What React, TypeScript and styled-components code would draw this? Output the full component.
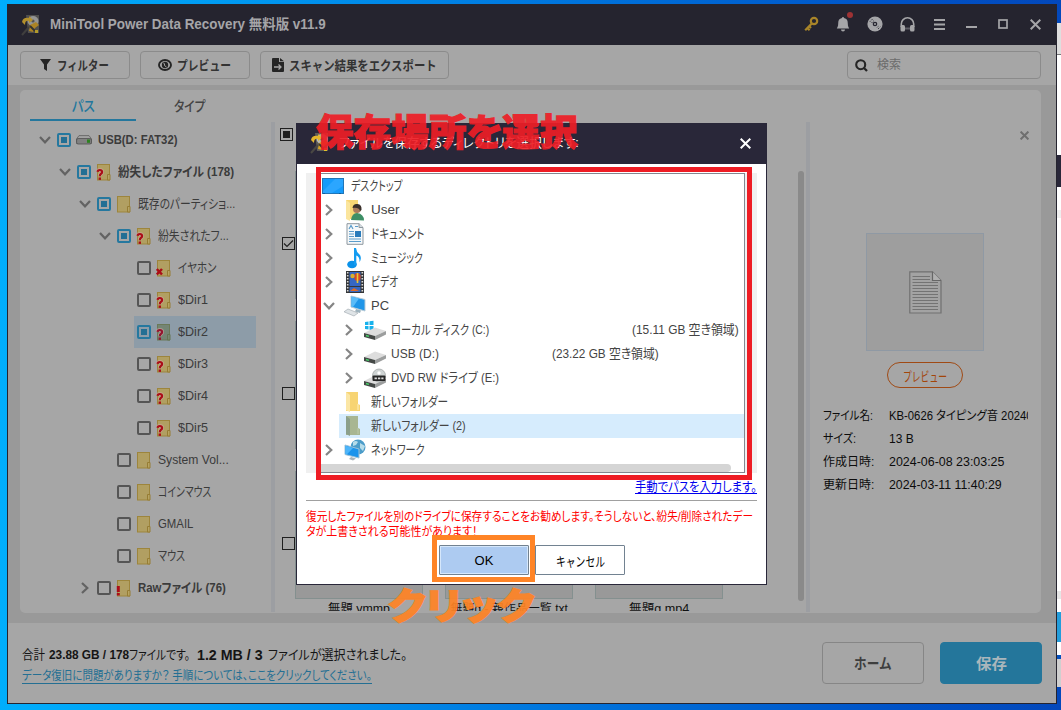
import { ReactNode, useLayoutEffect, useRef, useState } from 'react';
import styled, { createGlobalStyle, css } from 'styled-components';

const GlobalStyle = createGlobalStyle`
    * {
        box-sizing: border-box;
    }

    body {
        margin: 0;
        overflow: hidden;
        font-family: 'Liberation Sans', 'Noto Sans CJK JP', sans-serif;
        font-size: 12px;
        font-feature-settings: 'palt';
    }
`

const Desktop = styled.div`
    position: relative;
    display: flex;
    width: 1061px;
    height: 710px;
    padding: 4px 0 6px 7px;
    overflow: hidden;
    background: linear-gradient(90deg, #00aefc 0, #009cf3 20%, #0078df 50%, #0052c6 85%, #0348bb 100%);
`

const AppWindow = styled.div`
    display: flex;
    flex-direction: column;
    width: 1050px;
    height: 700px;
    flex: none;
    background: #999999;
    border: 1px solid #25242f;
    border-top: 0;
`

const Behind = styled.div`
    display: flex;
    flex-direction: column;
    width: 4px;
    margin-top: 19px;
    height: 664px;
    overflow: hidden;
`
const Strip = styled.div<{ $h: number; $color: string }>`
    flex: none;
    height: ${({ $h }) => $h}px;
    background: ${({ $color }) => $color};
`

const FitBox = styled.span`
    display: inline-block;
    flex: none;
    white-space: pre;
    text-align: left;
    vertical-align: top;
`
const FitInner = styled.span`
    display: inline-block;
    transform-origin: left center;
`

// squeezes a label to the width the narrow UI font would give it
function Fit({ w, children }: { w: number; children: ReactNode }) {
    const ref = useRef<HTMLSpanElement>(null);
    const [scale, setScale] = useState(1);

    useLayoutEffect(() => {
        if (ref.current && ref.current.offsetWidth) setScale(w / ref.current.offsetWidth);
    }, [w]);

    return (
        <FitBox style={{ width: w }}>
            <FitInner ref={ref} style={{ transform: `scaleX(${scale})` }}>{children}</FitInner>
        </FitBox>
    )
}

/* ---------- title bar ---------- */

const TitleBar = styled.header`
    display: flex;
    align-items: center;
    flex: none;
    height: 41px;
    padding: 0 5px 0 13px;
    background: #25242f;
    color: #a5a5a8;
    font-size: 14px;
    font-weight: bold;
`
const TitleText = styled.div`
    flex: 1;
    margin-left: 9px;
    padding-bottom: 2px;
    line-height: 20px;
`
const TitleIcons = styled.div`
    display: grid;
    grid-template-columns: repeat(8, 32px);
    place-items: center;
    padding-bottom: 1px;

    & svg {
        display: block;
    }
`

const Logo = ({ dim }: { dim?: boolean }) => (
    <svg width="20" height="22" viewBox="0 0 20 22" opacity={dim ? 0.75 : 1}>
        <path d="M5 1 L18 1 L18 19 L7 19 Z" fill="#5e5c58" />
        <ellipse cx="12" cy="7" rx="5.5" ry="5" fill="#b9bab5" />
        <circle cx="12" cy="7" r="1.6" fill="#62625e" />
        <path d="M1 8 Q2 3 8 4 L8 2 L12 6 L8 9 L8 7 Q4 6 4 11 Z" fill="#e3b52c" />
        <path d="M9 11 L15 8 L18 11 L14 14 L12 18 L8 17 Z" fill="#d8a322" />
        <path d="M1 21 L8 13" stroke="#4a4843" strokeWidth="2" />
        <path d="M9 12 L14 17" stroke="#3a3731" strokeWidth="2" />
        <rect x="14" y="16" width="3" height="3" fill="#e2c22a" />
    </svg>
)

const KeyIcon = () => (
    <svg width="15" height="16" viewBox="0 0 15 16">
        <circle cx="10" cy="5" r="3.2" fill="none" stroke="#a98529" strokeWidth="2.2" />
        <path d="M7.8 7.5 L1.2 14.2 M3.4 12 L5.6 14.2 M5.2 10.2 L7 12" stroke="#a98529" strokeWidth="2.2" fill="none" />
    </svg>
)
const BellIcon = () => (
    <svg width="20" height="24" viewBox="0 0 20 24">
        <path d="M10 5 a1 1 0 0 1 1 1 c3 .6 3.800 2.600 3.800 5.400 0 2.500.7 3.500 1.400 5.100 H3.800 c.7-1.600 1.400-2.600 1.400-5.100 C5.200 8.600 6 6.600 9 6 a1 1 0 0 1 1-1z M8 17.600 h4 a2 2 0 0 1-4 0z" fill="#a5a5a8" />
        <circle cx="17" cy="3" r="3" fill="#9e3234" />
    </svg>
)
const DiscIcon = () => (
    <svg width="16" height="16" viewBox="0 0 16 16">
        <circle cx="8" cy="8" r="7.6" fill="#a5a5a8" />
        <circle cx="8" cy="8" r="2.3" fill="#25242f" />
        <circle cx="8" cy="8" r="1" fill="#a5a5a8" />
        <path d="M2.800 5.800 L5.800 2.800 M4.500 7 L7 4.500 M10 11.500 L12 9.500 M11 13 L13.300 10.700" stroke="#25242f" strokeWidth="0.8" strokeDasharray="1.5 1" />
    </svg>
)
const HeadphoneIcon = () => (
    <svg width="15" height="15" viewBox="0 0 15 15">
        <path d="M1.300 10 V7 a6.200 6.200 0 0 1 12.400 0 V10" fill="none" stroke="#a5a5a8" strokeWidth="1.6" />
        <rect x="0.5" y="8" width="4.500" height="6.500" rx="1.500" fill="#a5a5a8" />
        <rect x="10" y="8" width="4.500" height="6.500" rx="1.500" fill="#a5a5a8" />
        <path d="M5 11.500 H10" stroke="#5e5d66" strokeWidth="2" />
    </svg>
)
const MenuIcon = () => (
    <svg width="11" height="11" viewBox="0 0 11 11">
        <path d="M0 1 H11 M0 5.500 H11 M0 10 H11" stroke="#a5a5a8" strokeWidth="2" />
    </svg>
)
const MinIcon = () => (
    <svg width="11" height="11" viewBox="0 0 11 11"><path d="M0 8 H11" stroke="#a5a5a8" strokeWidth="2" /></svg>
)
const MaxIcon = () => (
    <svg width="10" height="10" viewBox="0 0 10 10"><rect x="1" y="1" width="8" height="8" fill="none" stroke="#a5a5a8" strokeWidth="1.700" /></svg>
)
const CloseIcon = ({ size = 11, color = '#a5a5a8', width = 2 }: { size?: number; color?: string; width?: number }) => (
    <svg width={size} height={size} viewBox="0 0 11 11"><path d="M.7.7 L10.300 10.300 M10.300.7 L.7 10.300" stroke={color} strokeWidth={width} /></svg>
)

/* ---------- toolbar ---------- */

const Toolbar = styled.div`
    display: flex;
    align-items: center;
    gap: 10px;
    flex: none;
    height: 40px;
    padding: 0 15px 0 12px;
    background: #a6a6a6;
`
const ToolButton = styled.button<{ $w: number; $gap: number }>`
    display: flex;
    align-items: center;
    justify-content: center;
    gap: ${({ $gap }) => $gap}px;
    width: ${({ $w }) => $w}px;
    height: 28px;
    padding: 0 1px 1px 0;
    background: transparent;
    border: 1px solid #8b8b8b;
    border-radius: 4px;
    color: #333333;
    font: bold 13px 'Liberation Sans', 'Noto Sans CJK JP', sans-serif;
`
const Search = styled.div`
    display: flex;
    align-items: center;
    gap: 9px;
    width: 194px;
    height: 28px;
    margin-left: auto;
    padding-left: 7px;
    border: 1px solid #8b8b8b;
    border-radius: 4px;
    color: #6b6b6b;
    line-height: 16px;
`

/* ---------- main panel ---------- */

const Body = styled.main`
    flex: none;
    height: 538px;
    padding: 5px 15px 10px 12px;
`
const Panel = styled.div`
    display: flex;
    height: 523px;
    overflow: hidden;
    background: #a6a6a6;
    border-radius: 5px;
`
const Sidebar = styled.div`
    width: 251px;
    flex: none;
`
const Tabs = styled.div`
    display: flex;
    height: 32px;
    padding-left: 10px;
`
const Tab = styled.div<{ $active?: boolean }>`
    display: flex;
    align-items: center;
    justify-content: center;
    width: 106px;
    height: 31px;
    color: #444444;
    font-size: 14px;
    font-weight: 500;
    border-bottom: 2px solid transparent;

    ${({ $active }) => $active && css`
        color: #22779d;
        border-bottom-color: #24779d;
    `}
`
const Tree = styled.div`
    padding-top: 2px;
`
const TreeRow = styled.div<{ $level: number; $selected?: boolean }>`
    display: flex;
    align-items: center;
    height: 32px;
    width: ${({ $level }) => 236 - ($level * 20 + 14)}px;
    margin-left: ${({ $level }) => $level * 20 + 14}px;
    padding-left: 5px;
    background: ${({ $selected }) => $selected ? 'linear-gradient(90deg, transparent 20px, #8d9ca8 20px)' : 'none'};
    color: #3b3b3b;
    font-size: 13px;
`
const ChevronSlot = styled.div`
    display: flex;
    justify-content: center;
    width: 12px;
    margin-right: 6px;
`
const CheckBox = styled.div<{ $on?: boolean }>`
    display: grid;
    place-items: center;
    width: 14px;
    height: 14px;
    flex: none;
    border: 2px solid ${({ $on }) => $on ? '#25789f' : '#555555'};
    border-radius: 2px;

    &::after {
        content: '';
        width: 6px;
        height: 6px;
        background: ${({ $on }) => $on ? '#236f94' : 'transparent'};
    }
`
const TreeIcon = styled.div`
    display: flex;
    align-items: center;
    width: 22px;
    margin-left: 5px;
    flex: none;
`
const TreeLabel = styled.div<{ $bold?: boolean }>`
    font-weight: ${({ $bold }) => $bold ? 'bold' : 'normal'};
    line-height: 18px;
`
const Divider = styled.div`
    width: 4px;
    height: 490px;
    margin-top: 32px;
    flex: none;
    background: #9c9ea2;
`

const Chevron = ({ open, color = '#636363' }: { open?: boolean; color?: string }) => open
    ? <svg width="12" height="8" viewBox="0 0 12 8"><path d="M1 1 L6 6.300 L11 1" fill="none" stroke={color} strokeWidth="2.2" /></svg>
    : <svg width="8" height="12" viewBox="0 0 8 12"><path d="M1 1 L6.300 6 L1 11" fill="none" stroke={color} strokeWidth="2.2" /></svg>

const DriveIcon = () => (
    <svg width="16" height="10" viewBox="0 0 16 10">
        <path d="M3 .6 H13 L15.500 4 V8.500 H.5 V4z" fill="#a2a2a2" stroke="#5e5e5e" strokeWidth="0.8" />
        <rect x="0.6" y="3.500" width="14.800" height="5.500" rx="1.500" fill="#818181" stroke="#515151" strokeWidth="0.8" />
        <rect x="11" y="4.500" width="3" height="3.300" fill="#2d8220" />
    </svg>
)

type Mark = 'q' | 'x' | 'e' | undefined;

const FolderIcon = ({ mark, selected }: { mark?: Mark; selected?: boolean }) => (
    <svg width="16" height="17" viewBox="0 0 16 17">
        <rect x="1.500" y="0.500" width="12" height="15.500" fill={selected ? '#748574' : '#b19f62'} stroke={selected ? '#6b7958' : '#9d853c'} strokeWidth="1" />
        <path d="M11.500 16 V10.500 H14 V16z" fill={selected ? '#788a72' : '#b7a463'} stroke={selected ? '#667453' : '#967d34'} strokeWidth="1" />
        {mark === 'q' && (
            <g transform="translate(.8 5)">
                <path d="M.8 2.900 Q1 1 3 1 Q5.300 1 5.300 3 Q5.300 4.300 4 5 Q3 5.600 3 7.200" fill="none" stroke="#c9aba0" strokeWidth="4" opacity="0.6" />
                <path d="M.8 2.900 Q1 1 3 1 Q5.300 1 5.300 3 Q5.300 4.300 4 5 Q3 5.600 3 7.200" fill="none" stroke={selected ? '#95152f' : '#ab0d18'} strokeWidth="2.200" />
                <rect x="1.800" y="8.500" width="2.400" height="2.400" fill={selected ? '#95152f' : '#ab0d18'} />
            </g>
        )}
        {mark === 'x' && <path d="M.8 9 L6 14.500 M6 9 L.8 14.500" stroke="#ab0d18" strokeWidth="2.500" />}
        {mark === 'e' && <path d="M2.300 6 V12 M2.300 13 V15.500" stroke="#ab0d18" strokeWidth="3" />}
    </svg>
)

interface ITreeItem {
    level: number;
    label: string;
    w: number;
    chevron?: 'open' | 'closed';
    on?: boolean;
    bold?: boolean;
    mark?: Mark;
    drive?: boolean;
    selected?: boolean;
}

const treeItems: ITreeItem[] = [
    { level: 0, label: 'USB(D: FAT32)', w: 79, chevron: 'open', on: true, bold: true, drive: true },
    { level: 1, label: '紛失したファイル (178)', w: 116, chevron: 'open', on: true, bold: true, mark: 'q' },
    { level: 2, label: '既存のパーティショ...', w: 97, chevron: 'open', on: true },
    { level: 3, label: '紛失されたフ...', w: 71, chevron: 'open', on: true, mark: 'q' },
    { level: 4, label: 'イヤホン', w: 38, mark: 'x' },
    { level: 4, label: '$Dir1', w: 30, mark: 'q' },
    { level: 4, label: '$Dir2', w: 30, on: true, mark: 'q', selected: true },
    { level: 4, label: '$Dir3', w: 30, mark: 'q' },
    { level: 4, label: '$Dir4', w: 30, mark: 'q' },
    { level: 4, label: '$Dir5', w: 30, mark: 'q' },
    { level: 3, label: 'System Vol...', w: 71 },
    { level: 3, label: 'コインマウス', w: 53 },
    { level: 3, label: 'GMAIL', w: 35 },
    { level: 3, label: 'マウス', w: 27 },
    { level: 2, label: 'Rawファイル (76)', w: 88, chevron: 'closed', bold: true, mark: 'e' },
]

/* ---------- file grid ---------- */

const Files = styled.div`
    display: flex;
    width: 531px;
    height: 521px;
    flex: none;
    overflow: hidden;
    padding-top: 38px;
`
const CheckColumn = styled.div`
    display: flex;
    flex-direction: column;
    width: 20px;
    flex: none;
    padding-left: 5px;
`
const FileCheck = styled.div<{ $top: number; $left: number }>`
    display: grid;
    place-items: center;
    width: 13px;
    height: 13px;
    flex: none;
    margin-top: ${({ $top }) => $top}px;
    margin-left: ${({ $left }) => $left}px;
    border: 1px solid #1f1f1f;
`
const FilledMark = styled.div`
    width: 7px;
    height: 7px;
    background: #1e1e1e;
`
const CardGrid = styled.div`
    display: grid;
    grid-template-columns: repeat(3, 128px);
    grid-auto-rows: 150px;
    column-gap: 22px;
    height: 446px;
    flex: none;
    margin-top: 43px;
`
const Card = styled.div`
    display: flex;
    flex-direction: column;
    align-items: center;
    color: #111111;
    font-size: 12px;
    line-height: 18px;
`
const Thumb = styled.div`
    width: 128px;
    height: 128px;
    flex: none;
    margin-bottom: 1px;
    background: #999999;
    border: 1px solid #84908f;
`
const ScrollThumb = styled.div`
    width: 6px;
    height: 430px;
    margin-top: 43px;
    margin-left: 75px;
    flex: none;
    border-radius: 3px;
    background: #8a8a8a;
`

const cards = [
    ['', 0], ['', 0], ['', 0],
    ['', 0], ['', 0], ['', 0],
    ['無題.ymmp', 62], ['無題g - 親作品一覧.txt', 117], ['無題g.mp4', 60],
] as [string, number][]

/* ---------- details ---------- */

const Details = styled.div`
    display: flex;
    flex-direction: column;
    align-items: center;
    width: 231px;
    padding: 41px 13px 0;
    color: #0c0c0c;
`
const DetailsClose = styled.div`
    display: flex;
    align-self: flex-end;
    height: 102px;
    margin-right: -1px;
`
const PreviewBox = styled.div`
    display: grid;
    place-items: center;
    width: 118px;
    height: 118px;
    flex: none;
    margin-right: 1px;
    background: #9e9e9e;
    border: 1px solid #8f99a4;
`
const PreviewButton = styled.button`
    display: grid;
    place-items: center;
    width: 76px;
    height: 26px;
    margin: 11px 1px 16px 0;
    padding: 0;
    background: transparent;
    border: 1px solid #a04a14;
    border-radius: 13px;
    color: #a34509;
    font: 13px 'Liberation Sans', 'Noto Sans CJK JP', sans-serif;
`
const InfoRow = styled.div`
    display: grid;
    grid-template-columns: 66px 139px;
    align-self: stretch;
    height: 23px;
    align-items: center;
    line-height: 20px;
    overflow: hidden;

    & > * {
        overflow: hidden;
    }
`

const info = [
    ['ファイル名:', 50, 'KB-0626 タイピング音 20240', 144],
    ['サイズ:', 33, '13 B', 25],
    ['作成日時:', 51, '2024-06-08 23:03:25', 115],
    ['更新日時:', 51, '2024-03-11 11:40:29', 113],
] as [string, number, string, number][]

/* ---------- footer ---------- */

const Footer = styled.footer`
    display: flex;
    align-items: center;
    gap: 16px;
    flex: none;
    height: 80px;
    padding: 0 14px;
    background: #a6a6a6;
`
const Status = styled.div`
    flex: 1;
    color: #151515;
`
const StatusLine = styled.div`
    display: flex;
    align-items: center;
    height: 22px;
    margin: 1px 0 2px;
    font-size: 13px;
    line-height: 20px;

    & b {
        margin: 0 0 0 4px;
    }

    & b:nth-of-type(2) {
        margin: 0 5px 0 7px;
        font-size: 14px;
    }
`
const HelpLink = styled.a`
    display: inline-block;
    border-bottom: 1px solid #246f93;
    color: #246f93;
    font-size: 12.5px;
    line-height: 16px;
    height: 16px;
`
const FooterButton = styled.button<{ $primary?: boolean }>`
    width: 102px;
    height: 42px;
    padding: 0 0 1px;
    border: 1px solid ${({ $primary }) => $primary ? '#24769b' : '#868686'};
    border-radius: 4px;
    background: ${({ $primary }) => $primary ? '#24769b' : 'transparent'};
    color: ${({ $primary }) => $primary ? '#aab6bc' : '#3e3e3e'};
    font: bold 15px 'Liberation Sans', 'Noto Sans CJK JP', sans-serif;
`

/* ---------- dialog ---------- */

const Dialog = styled.div`
    position: absolute;
    left: 296px;
    top: 123px;
    width: 471px;
    height: 462px;
    background: #ffffff;
    border: 1px solid #292739;
    color: #444444;
`
const DialogHeader = styled.div`
    display: flex;
    align-items: center;
    height: 40px;
    padding: 0 15px 2px 13px;
    background: #292739;
    color: #ffffff;
    font-size: 13px;
    line-height: 20px;
`
const DialogTitle = styled.div`
    flex: 1;
    margin-left: 9px;
`
const DialogBody = styled.div`
    padding: 9px 9px 0;
`
const ListWell = styled.div`
    height: 300px;
    padding: 0 12px;
    background: #f0f0f0;
`
const List = styled.div`
    display: flex;
    flex-direction: column;
    height: 300px;
    background: #ffffff;
    border: 1px solid #828790;
`
const DirRow = styled.div<{ $indent: number; $selected?: boolean }>`
    display: flex;
    align-items: center;
    height: 24px;
    flex: none;
    margin-left: ${({ $indent }) => $indent * 20}px;
    padding-left: 2px;
    font-size: 13px;
    line-height: 20px;
    background: ${({ $selected }) => $selected ? '#d6ecfd' : 'none'};
`
const DirChevron = styled.div`
    display: flex;
    justify-content: center;
    width: 15px;
`
const DirIcon = styled.div`
    display: flex;
    width: 24px;
    margin: 0 4px 0 7px;
    justify-content: center;
`
const RootIcon = styled(DirIcon)`
    justify-content: flex-start;
    width: 26px;
    margin: 0 4px 0 0;
    padding-left: 1px;
`
const FreeSpace = styled.div<{ $end: number }>`
    margin-left: auto;
    margin-right: ${({ $end }) => $end}px;
`
const HScroll = styled.div`
    width: 412px;
    height: 8px;
    margin-top: 2px;
    background: #d5d5d5;
    border-radius: 0 4px 4px 0;
`
const PathLink = styled.div`
    height: 18px;
    margin: 5px 0 4px;
    text-align: right;
    color: #0000ee;
    font-size: 13px;
    line-height: 18px;

    & > span {
        height: 16px;
        border-bottom: 1px solid #0000ee;
    }
`
const Warning = styled.div`
    padding-top: 9px;
    border-top: 1px solid #a0a0a0;
    color: #ff0000;
    font-size: 12px;
    line-height: 15px;
    height: 45px;
`
const DialogButtons = styled.div`
    display: flex;
    gap: 6px;
    padding-left: 133px;
`
const DialogButton = styled.button<{ $primary?: boolean }>`
    width: 90px;
    height: 30px;
    padding: 0;
    border: 1px solid #728291;
    border-radius: 1px;
    background: ${({ $primary }) => $primary ? '#adcbf1' : '#ffffff'};
    box-shadow: ${({ $primary }) => $primary ? 'inset 0 0 0 1px #d5e7fb' : 'none'};
    color: #000000;
    font: 13px 'Liberation Sans', 'Noto Sans CJK JP', sans-serif;
`

const Frame = styled.div<{ $x: number; $y: number; $w: number; $h: number; $color: string }>`
    position: absolute;
    left: ${({ $x }) => $x}px;
    top: ${({ $y }) => $y}px;
    width: ${({ $w }) => $w}px;
    height: ${({ $h }) => $h}px;
    border: 5px solid ${({ $color }) => $color};
`
const Callout = styled.div<{ $x: number; $y: number; $color: string }>`
    position: absolute;
    left: ${({ $x }) => $x}px;
    top: ${({ $y }) => $y}px;
    color: ${({ $color }) => $color};
    opacity: 0.92;
    font-family: 'Noto Sans CJK JP', sans-serif;
    font-weight: 900;
    font-size: 37px;
    line-height: 44px;
    -webkit-text-stroke: 1.2px ${({ $color }) => $color};
`

const DesktopIcon = () => (
    <svg width="22" height="17" viewBox="0 0 22 17">
        <rect x="0.5" y="0.5" width="21" height="15" fill="#159bfb" stroke="#2176b8" />
        <path d="M1 13 L13 1 H21 V8 L10 15 H1z" fill="#2ba6ff" />
        <path d="M1 15.500 H21" stroke="#0b5f9d" strokeDasharray="2 14 2 2" />
    </svg>
)
const UserIcon = () => (
    <svg width="20" height="21" viewBox="0 0 20 21">
        <path d="M1 0 H13 V19 H1z" fill="#f8d775" />
        <path d="M1 0 L5 3 V21 L1 19z" fill="#fbe59d" />
        <path d="M6 20 Q7 13 12 13 Q19 14 19 20.500z" fill="#3d8f66" />
        <circle cx="12" cy="9" r="4" fill="#a97b5c" />
        <path d="M7.500 8 Q8 3.500 12.500 4 Q17 4.500 16.500 10 L15 11 Q14 7 7.500 8z" fill="#3a302b" />
    </svg>
)
const DocIcon = () => (
    <svg width="18" height="22" viewBox="0 0 18 22">
        <path d="M1 .7 H13 L17 4.500 V21.300 H1z" fill="#f5f8fa" stroke="#8d979e" />
        <path d="M13 .7 V4.500 H17" fill="#d5dde2" stroke="#8d979e" />
        <path d="M3 6 L5 2.500 L7 6 M9 3.500 H12 M3 8.500 H8 M3 11 H8 M3 13.500 H8 M3 16 H15 M3 18.500 H15" stroke="#5b9cca" strokeWidth="1.2" fill="none" />
        <rect x="9" y="8" width="6" height="6" fill="#297bbb" />
    </svg>
)
const MusicIcon = () => (
    <svg width="18" height="22" viewBox="0 0 18 22">
        <ellipse cx="6" cy="17.500" rx="4.800" ry="3.800" fill="#0a92ea" />
        <path d="M8 18 V1 H10 Q10.500 5 13 7 Q16.500 10 13.500 15.500 Q14 10 10.300 8.500 V18z" fill="#149cf1" />
    </svg>
)
const VideoIcon = () => (
    <svg width="18" height="22" viewBox="0 0 18 22">
        <rect width="18" height="22" fill="#343638" />
        <rect x="3.500" y="1" width="11" height="14" fill="#3567c3" />
        <rect x="3.500" y="16" width="11" height="5" fill="#3567c3" />
        <ellipse cx="11.500" cy="6" rx="3.200" ry="4" fill="#d74725" />
        <path d="M11.500 2 V12" stroke="#e8c933" strokeWidth="1.6" />
        <circle cx="6.500" cy="5" r="2.200" fill="#d9ae2f" />
        <path d="M4 20 L8 17 L13 20z" fill="#d96a28" />
        <path d="M1.700 1 V22 M16.300 1 V22" stroke="#dadada" strokeWidth="1.6" strokeDasharray="1.5 1.5" />
    </svg>
)
const PcIcon = () => (
    <svg width="24" height="22" viewBox="0 0 24 22">
        <path d="M8 1 L22 4.500 V16 L8 12z" fill="#2096e8" stroke="#b7cbd8" />
        <path d="M8.500 1.500 L16 3.500 L10 12 L8.500 11.700z" fill="#5bbcf8" />
        <path d="M13 14 L18 15.500 L17 18 L12 16.500z" fill="#9db2bd" />
        <path d="M5 14 L15 18 L11 21 L1 16.800z" fill="#dfe4e7" stroke="#a6afb5" strokeWidth="0.7" />
    </svg>
)
const DiskIcon = ({ kind }: { kind: 'win' | 'usb' | 'dvd' }) => (
    <svg width="22" height="20" viewBox="0 0 22 20">
        {kind === 'win' && <path d="M1 2 L4.500 1.500 V5 H1z M5.500 1.300 L9.500 .7 V5 H5.500z M1 6 H4.500 V9.500 L1 9z M5.500 6 H9.500 V10.300 L5.500 9.700z" fill="#17b1ec" />}
        <path d="M0 13 L11 7.500 L22 11 L11 16z" fill="#dddddd" />
        <path d="M0 13 L11 16 V20 L0 17z" fill="#444846" />
        <path d="M11 16 L22 11 V14.500 L11 20z" fill="#9c9e9e" />
        <path d="M2 15.500 L5 16.300" stroke="#48d36a" strokeWidth="1.3" />
        {kind === 'dvd' && (
            <g>
                <circle cx="15" cy="7.500" r="6.500" fill="#cfd4d4" stroke="#9b9f9f" strokeWidth="0.7" />
                <circle cx="15" cy="5" r="1.700" fill="#ffffff" />
                <rect x="8.500" y="7.500" width="13" height="5.500" rx="1" fill="#262626" />
                <path d="M10.500 10.300 H19.500" stroke="#dddddd" strokeWidth="1.7" strokeDasharray="2.4 1" />
            </g>
        )}
    </svg>
)
const DirFolderIcon = ({ selected }: { selected?: boolean }) => (
    <svg width="20" height="20" viewBox="0 0 20 20">
        <path d="M1 0 H13 V12 L15 13 V19 H1z" fill={selected ? '#a8b692' : '#f7d473'} />
        <path d="M1 0 L5 3 V20 L1 18z" fill={selected ? '#8ca08b' : '#fbe6a5'} />
        <path d="M13 12 V18" stroke={selected ? '#bdc9a8' : '#fff0bd'} />
    </svg>
)
const NetworkIcon = () => (
    <svg width="22" height="22" viewBox="0 0 22 22">
        <circle cx="14" cy="8" r="7.500" fill="#4b9cc9" />
        <path d="M9 3 Q12 1 14 3 L12 6 L9 7z M16 4 L21 7 L19 12 L16 9z" fill="#b6dcea" />
        <path d="M1 6 L15 10 V19 L1 15.500z" fill="#1b94ec" stroke="#9cc2d9" />
        <path d="M1.500 6.700 L9 9 L3 15.300 L1.500 15z" fill="#4db5fa" />
        <path d="M7 18 L12 19.500 L9 21.500 L5 20z" fill="#a9b4ba" />
    </svg>
)

interface IDirItem {
    indent: number;
    label: string;
    w: number;
    icon: ReactNode;
    chevron?: 'open' | 'closed';
    root?: boolean;
    selected?: boolean;
    free?: string;
    freeEnd?: number;
}

const dirItems: IDirItem[] = [
    { indent: 0, label: 'デスクトップ', w: 52, icon: <DesktopIcon />, root: true },
    { indent: 0, label: 'User', w: 28, icon: <UserIcon />, chevron: 'closed' },
    { indent: 0, label: 'ドキュメント', w: 53, icon: <DocIcon />, chevron: 'closed' },
    { indent: 0, label: 'ミュージック', w: 52, icon: <MusicIcon />, chevron: 'closed' },
    { indent: 0, label: 'ビデオ', w: 27, icon: <VideoIcon />, chevron: 'closed' },
    { indent: 0, label: 'PC', w: 18, icon: <PcIcon />, chevron: 'open' },
    { indent: 1, label: 'ローカル ディスク (C:)', w: 98, icon: <DiskIcon kind="win" />, chevron: 'closed', free: '(15.11 GB 空き領域)', freeEnd: 5 },
    { indent: 1, label: 'USB (D:)', w: 48, icon: <DiskIcon kind="usb" />, chevron: 'closed', free: '(23.22 GB 空き領域)', freeEnd: 85 },
    { indent: 1, label: 'DVD RW ドライブ (E:)', w: 108, icon: <DiskIcon kind="dvd" />, chevron: 'closed' },
    { indent: 0, label: '新しいフォルダー', w: 77, icon: <DirFolderIcon /> },
    { indent: 0, label: '新しいフォルダー (2)', w: 95, icon: <DirFolderIcon selected />, selected: true },
    { indent: 0, label: 'ネットワーク', w: 54, icon: <NetworkIcon />, chevron: 'closed' },
]

// the selection starts at the icon, after the chevron slot
const SelectedDir = styled(DirRow)`
    margin-left: 20px;
    padding-left: 0;

    & > ${DirIcon} {
        margin-left: 4px;
    }
`

function Directory({ item }: { item: IDirItem }) {
    const Row = item.selected ? SelectedDir : DirRow;
    const Icon = item.root ? RootIcon : DirIcon;
    return (
        <Row $indent={item.indent} $selected={item.selected}>
            {!item.root && !item.selected && (
                <DirChevron>{item.chevron && <Chevron open={item.chevron === 'open'} color="#858585" />}</DirChevron>
            )}
            <Icon>{item.icon}</Icon>
            <Fit w={item.w}>{item.label}</Fit>
            {item.free && <FreeSpace $end={item.freeEnd || 0}><Fit w={107}>{item.free}</Fit></FreeSpace>}
        </Row>
    )
}

function SaveDialog() {
    return (
        <Dialog>
            <DialogHeader>
                <Logo />
                <DialogTitle><Fit w={240}>ファイルを保存するディレクトリを選択します:</Fit></DialogTitle>
                <CloseIcon color="#ffffff" />
            </DialogHeader>
            <DialogBody>
                <ListWell>
                    <List>
                        {dirItems.map((item) => <Directory key={item.label} item={item} />)}
                        <HScroll />
                    </List>
                </ListWell>
                <PathLink><Fit w={122}>手動でパスを入力します。</Fit></PathLink>
                <Warning>
                    <Fit w={447}>復元したファイルを別のドライブに保存することをお勧めします。そうしないと、紛失/削除されたデー</Fit>
                    <Fit w={172}>タが上書きされる可能性があります！</Fit>
                </Warning>
                <DialogButtons>
                    <DialogButton $primary>OK</DialogButton>
                    <DialogButton><Fit w={49}>キャンセル</Fit></DialogButton>
                </DialogButtons>
            </DialogBody>
        </Dialog>
    )
}

export default function App() {
    return (
        <Desktop>
            <GlobalStyle />
            <AppWindow>
                <TitleBar>
                    <Logo dim />
                    <TitleText><Fit w={276}>MiniTool Power Data Recovery 無料版 v11.9</Fit></TitleText>
                    <TitleIcons>
                        <KeyIcon />
                        <BellIcon />
                        <DiscIcon />
                        <HeadphoneIcon />
                        <MenuIcon />
                        <MinIcon />
                        <MaxIcon />
                        <CloseIcon />
                    </TitleIcons>
                </TitleBar>

                <Toolbar>
                    <ToolButton $w={110} $gap={6}>
                        <svg width="11" height="12" viewBox="0 0 11 12"><path d="M0 0 H11 L7 5.500 V12 L4 10 V5.500z" fill="#252525" /></svg>
                        <Fit w={52}>フィルター</Fit>
                    </ToolButton>
                    <ToolButton $w={110} $gap={5}>
                        <svg width="14" height="12" viewBox="0 0 14 12">
                            <ellipse cx="7" cy="6" rx="6" ry="5" fill="none" stroke="#252525" strokeWidth="1.9" />
                            <circle cx="7" cy="6" r="3.200" fill="#252525" />
                            <path d="M5.300 4 Q7 4 6.500 6.500 L8.500 8" fill="none" stroke="#a6a6a6" strokeWidth="1" />
                        </svg>
                        <Fit w={54}>プレビュー</Fit>
                    </ToolButton>
                    <ToolButton $w={189} $gap={5}>
                        <svg width="12" height="14" viewBox="0 0 12 14">
                            <path d="M0 1 Q0 0 1 0 H7 V4 H12 V13 Q12 14 11 14 H1 Q0 14 0 13z M8 0 L12 3.300 H8z" fill="#252525" />
                            <path d="M2 9 H9 M6.500 6.500 L9 9 L6.500 11.500" fill="none" stroke="#a6a6a6" strokeWidth="1.3" />
                        </svg>
                        <Fit w={148}>スキャン結果をエクスポート</Fit>
                    </ToolButton>
                    <Search>
                        <svg width="13" height="13" viewBox="0 0 13 13">
                            <circle cx="5.700" cy="5.700" r="4.500" fill="none" stroke="#252525" strokeWidth="2.1" />
                            <path d="M8.700 8.700 L12 12" stroke="#252525" strokeWidth="2.3" />
                        </svg>
                        <span>検索</span>
                    </Search>
                </Toolbar>

                <Body>
                    <Panel>
                        <Sidebar>
                            <Tabs>
                                <Tab $active><Fit w={23}>パス</Fit></Tab>
                                <Tab><Fit w={31}>タイプ</Fit></Tab>
                            </Tabs>
                            <Tree>
                                {treeItems.map((item) => (
                                    <TreeRow key={item.label} $level={item.level} $selected={item.selected}>
                                        <ChevronSlot>{item.chevron && <Chevron open={item.chevron === 'open'} />}</ChevronSlot>
                                        <CheckBox $on={item.on} />
                                        <TreeIcon>{item.drive ? <DriveIcon /> : <FolderIcon mark={item.mark} selected={item.selected} />}</TreeIcon>
                                        <TreeLabel $bold={item.bold}><Fit w={item.w}>{item.label}</Fit></TreeLabel>
                                    </TreeRow>
                                ))}
                            </Tree>
                        </Sidebar>
                        <Divider />
                        <Files>
                            <CheckColumn>
                                <FileCheck $top={0} $left={0}><FilledMark /></FileCheck>
                                <FileCheck $top={96} $left={2}>
                                    <svg width="11" height="11" viewBox="0 0 11 11"><path d="M1 5.500 L4 8.500 L10 2.500" fill="none" stroke="#1f1f1f" strokeWidth="1.2" /></svg>
                                </FileCheck>
                                <FileCheck $top={137} $left={2} />
                                <FileCheck $top={137} $left={2} />
                            </CheckColumn>
                            <CardGrid>
                                {cards.map(([name, w], i) => (
                                    <Card key={i}>
                                        <Thumb />
                                        {name && <Fit w={w}>{name}</Fit>}
                                    </Card>
                                ))}
                            </CardGrid>
                            <ScrollThumb />
                        </Files>
                        <Divider />
                        <Details>
                            <DetailsClose><CloseIcon size={9} color="#6f6f6f" width={2.4} /></DetailsClose>
                            <PreviewBox>
                                <svg width="33" height="43" viewBox="0 0 33 43">
                                    <path d="M.8.8 H23.500 L32 9.500 V42 H.8z" fill="#a3a3a3" stroke="#707070" strokeWidth="1.2" />
                                    <path d="M23.500.8 V9.500 H32" fill="#b0b0b0" stroke="#666666" strokeWidth="1.2" />
                                    <path d="M3.500 5.500 H21 M3.500 8.500 H21 M3.500 11.500 H29 M3.500 14.500 H29 M3.500 17.500 H29 M3.500 20.500 H29 M3.500 23.500 H29 M3.500 26.500 H29 M3.500 29.500 H29 M3.500 32.500 H29 M3.500 35.500 H29 M3.500 38.500 H29" stroke="#737373" strokeWidth="1" />
                                </svg>
                            </PreviewBox>
                            <PreviewButton><Fit w={44}>プレビュー</Fit></PreviewButton>
                            {info.map(([label, lw, value, vw]) => (
                                <InfoRow key={label}>
                                    <div><Fit w={lw}>{label}</Fit></div>
                                    <div><Fit w={vw}>{value}</Fit></div>
                                </InfoRow>
                            ))}
                        </Details>
                    </Panel>
                </Body>

                <Footer>
                    <Status>
                        <StatusLine>
                            <Fit w={23}>合計</Fit>
                            <b><Fit w={80}>23.88 GB / 178</Fit></b>
                            <Fit w={61}>ファイルです。</Fit>
                            <b><Fit w={66}>1.2 MB / 3</Fit></b>
                            <Fit w={139}>ファイルが選択されました。</Fit>
                        </StatusLine>
                        <HelpLink><Fit w={350}>データ復旧に問題がありますか？ 手順については、ここをクリックしてください。</Fit></HelpLink>
                    </Status>
                    <FooterButton><Fit w={38}>ホーム</Fit></FooterButton>
                    <FooterButton $primary><Fit w={31}>保存</Fit></FooterButton>
                </Footer>
            </AppWindow>

            <Behind>
                <Strip $h={31} $color="#dedede" />
                <Strip $h={1} $color="#777777" />
                <Strip $h={100} $color="#ffffff" />
                <Strip $h={32} $color="#292739" />
                <Strip $h={23} $color="#ffffff" />
                <Strip $h={8} $color="#eeeeee" />
                <Strip $h={373} $color="#ffffff" />
                <Strip $h={8} $color="#e6e6e6" />
                <Strip $h={13} $color="#ffffff" />
                <Strip $h={30} $color="#239ddb" />
                <Strip $h={13} $color="#ffffff" />
                <Strip $h={4} $color="#0650bd" />
                <Strip $h={28} $color="#cfcfcf" />
            </Behind>

            <SaveDialog />
            <Frame $x={316} $y={167} $w={436} $h={313} $color="#ee1c24" />
            <Frame $x={432} $y={535} $w={103} $h={47} $color="#ff8426" />
            <Callout $x={316} $y={108} $color="#ee1e26"><Fit w={261}>保存場所を選択</Fit></Callout>
            <Callout $x={388} $y={582} $color="#ff8426"><Fit w={146}>クリック</Fit></Callout>
        </Desktop>
    )
}
